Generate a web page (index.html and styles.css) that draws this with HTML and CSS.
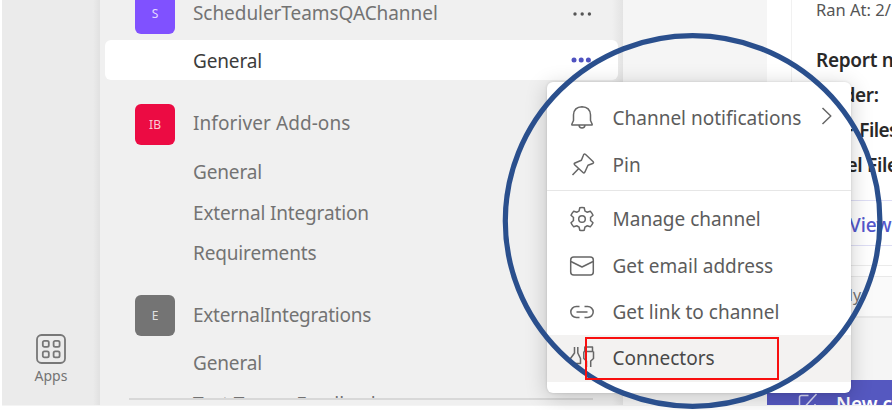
FILE: index.html
```
<!DOCTYPE html>
<html lang="en">
<head>
<meta charset="utf-8">
<title>Teams</title>
<link rel="stylesheet" href="styles.css">
</head>
<body>
<div class="app">
  <nav class="rail">
    <svg class="apps-icon" viewBox="0 0 30 30" fill="none" stroke="#777" stroke-width="1.8">
      <rect x="1" y="1" width="28" height="28" rx="4.5"/>
      <rect x="6.8" y="6.8" width="6" height="6" rx="1.6"/><rect x="17.6" y="6.8" width="6" height="6" rx="1.6"/>
      <rect x="6.8" y="17.4" width="6" height="6" rx="1.6"/><rect x="17.6" y="17.4" width="6" height="6" rx="1.6"/>
    </svg>
    <span class="apps-label">Apps</span>
  </nav>

  <aside class="teams">
    <div class="team team-first"><span class="tile purple">S</span><span class="t-sched">SchedulerTeamsQAChannel</span>
      <svg class="dots" viewBox="0 0 22 8" fill="#555"><circle cx="3" cy="4" r="1.7"/><circle cx="10.2" cy="4" r="1.7"/><circle cx="17.4" cy="4" r="1.7"/></svg>
    </div>
    <div class="channel selected"><span class="t-gen">General</span>
      <svg class="dots" viewBox="0 0 22 8" fill="#4f52c0"><circle cx="3" cy="4" r="2.5"/><circle cx="10.2" cy="4" r="2.5"/><circle cx="17.4" cy="4" r="2.5"/></svg>
    </div>
    <div class="team team-red"><span class="tile red">IB</span><span class="t-info">Inforiver Add-ons</span></div>
    <div class="channel"><span class="t-gen">General</span></div>
    <div class="channel"><span class="t-ext">External Integration</span></div>
    <div class="channel"><span class="t-req">Requirements</span></div>
    <div class="team team-grey"><span class="tile grey">E</span><span class="t-exti">ExternalIntegrations</span></div>
    <div class="channel"><span class="t-gen">General</span></div>
    <div class="channel cut"><span class="t-cut">Test Teams Feedback</span></div>
    <div class="list-end"></div>
  </aside>

  <main class="chat">
    <div class="gutter"></div>
    <div class="thread">
      <article class="card">
        <p class="ran">Ran At: 2/</p>
        <p class="bold first">Report n</p>
        <p class="bold folder">Folder:</p>
        <p class="bold pdf">PDF Files</p>
        <p class="bold excel">Excel Files</p>
        <p class="view">View</p>
      </article>
      <div class="reply">Reply</div>
      <div class="new">
        <svg class="compose" viewBox="0 0 20 20" fill="none" stroke="#d9d9f5" stroke-width="1.5"><path d="M10.5 2.5H3.5Q1.5 2.5 1.5 4.5V20M17 11V20M7.5 13L18.5 1M7.5 13L6.5 16"/></svg>
        <span>New c</span>
      </div>
    </div>
  </main>

  <section class="menu">
    <div class="item">
      <svg viewBox="0 0 26 26"><path d="M2.900 19L4.500 15.500V9.800Q5 2 13 1.800Q21 2 21.500 9.800V15.500L23.100 19Q23.500 20 22.500 20H3.500Q2.500 20 2.900 19ZM10 20.300Q10.500 23 13 23T16 20.300"/></svg>
      <span class="m-chan">Channel notifications</span>
      <svg class="chev" viewBox="0 0 12 20"><path d="M1.500 2L9.800 10L1.500 18"/></svg>
    </div>
    <div class="item"><svg viewBox="0 0 26 26"><path d="M16.600 2.500L24 9.500Q25.200 10.800 23.700 11.500L19 13.300L15.800 20.200Q15.100 21.600 14 20.500L5.600 12.700Q4.600 11.700 6 11L12.400 8.300L14.300 3.400Q15 1.300 16.600 2.500ZM9.300 17L3.500 23"/></svg><span class="m-pin">Pin</span></div>
    <hr>
    <div class="item"><svg viewBox="0 0 26 26"><path d="M10.800 1.800Q13 1.200 15.200 1.800L16 5.100Q17.100 5.600 18 6.200L21.300 5.200Q23 7 24 9.200L21.500 11.500Q21.700 13 21.500 14.500L24 16.800Q23 19.100 21.300 20.800L18 19.800Q17.100 20.500 16 20.900L15.200 24.200Q13 24.800 10.800 24.200L10 20.900Q8.900 20.500 8 19.800L4.700 20.800Q3 19.100 2 16.800L4.500 14.500Q4.300 13 4.500 11.500L2 9.200Q3 7 4.700 5.200L8 6.200Q8.900 5.600 10 5.100Z"/><circle cx="13" cy="13" r="3.300"/></svg><span class="m-man">Manage channel</span></div>
    <div class="item"><svg viewBox="0 0 26 26"><rect x="1.700" y="4" width="22.600" height="18" rx="3"/><path d="M1.900 8.500L13 14L24.100 8.500"/></svg><span class="m-mail">Get email address</span></div>
    <div class="item"><svg viewBox="0 0 26 26"><path d="M10.500 7.500H7.300A5.500 5.500 0 0 0 7.300 18.500H10.500M15.500 7.500H18.700A5.500 5.500 0 0 1 18.700 18.500H15.500M7.500 13H18.500"/></svg><span class="m-link">Get link to channel</span></div>
    <div class="item active"><svg viewBox="0 0 26 26"><path d="M5.500 2V8L1.500 13.500V18.500H11.500V13.500L8.800 8V2M5 18.500V22M15.800 2H23.500V6.500H15.800ZM14.800 6.500V13.500L17.500 16V22M24.500 6.500V13.500L21.700 16V22M14.800 6.500H24.500"/></svg><span class="m-con">Connectors</span></div>
  </section>
</div>
<svg class="ring" viewBox="0 0 892 410" fill="none"><ellipse cx="692.600" cy="221" rx="187.300" ry="185.300" stroke="#2a4f8d" stroke-width="5.200"/></svg>
<div class="highlight"></div>
</body>
</html>
```
FILE: styles.css
```
* { box-sizing: border-box; }
body { margin: 0; width: 892px; height: 410px; overflow: hidden; background: #fff; font-family: "Noto Sans", "Open Sans", sans-serif; font-size: 19px; color: #737373; }
.app { position: relative; display: grid; grid-template-columns: 98px 523px 1fr; height: 406px; margin-left: 2px; border-bottom: 1px solid #f4f4f4; }
.rail { display: flex; flex-direction: column; align-items: center; padding-top: 334px; overflow: hidden; background: linear-gradient(90deg, #ebebeb 91px, #e1e1e1 98px); }
.apps-icon { width: 30px; height: 30px; flex: none; }
.apps-label { margin-top: 2px; font-size: 14px; line-height: 20px; }
.teams { height: 405px; overflow: hidden; display: flex; flex-direction: column; background: linear-gradient(90deg, #f0f0f0 512px, #e3e3e3 523px); }
.teams > div { flex: none; }
.team { display: flex; align-items: center; height: 41px; padding-left: 35px; white-space: nowrap; }
.team > span:not(.tile) { padding-bottom: 2px; }
.team-first { margin-top: -7px; }
.t-ext, .t-req { letter-spacing: -.15px; }
.t-exti { letter-spacing: -.25px; }
.t-info { letter-spacing: .08px; }
.t-sched { letter-spacing: -.06px; }
.tile { display: grid; place-items: center; width: 40px; height: 41px; margin-right: 18px; border-radius: 6px; color: #ffffffcc; font-size: 12px; }
.purple { background: #8051ff; }
.red { background: #ec0b43; }
.grey { background: #747474; }
.channel { display: flex; align-items: center; height: 40.700px; padding-left: 93px; white-space: nowrap; }
.selected { height: 40px; margin: 6px 5px 0 5px; padding-left: 88px; border-radius: 6px; background: #fff; color: #3c3c3c; }
.selected .t-gen { padding-top: 2px; }
.t-gen { letter-spacing: -.15px; }
.dots { width: 22px; height: 8px; margin-left: auto; margin-right: 29px; }
.selected .dots { margin-right: 25px; }
.team-red { margin-top: 23.500px; margin-bottom: 7px; }
.team-grey { margin-top: 21.500px; margin-bottom: 7px; }
.cut { height: 16px; margin-top: -1.500px; align-items: flex-start; overflow: hidden; line-height: 44px; }
.list-end { width: 464px; height: 2px; margin-left: 29px; background: #d8d8d8; }
.chat { display: grid; grid-template-columns: 144px 1fr; min-width: 0; height: 405px; background: #f5f5f5; overflow: hidden; }
.thread { overflow: hidden; white-space: nowrap; }
.card { height: 277px; padding-left: 49px; background: linear-gradient(90deg, #fff 24px, #f1f1f1 24px, #f1f1f1 25px, #fff 25px); border-bottom: 1px solid #e9e9e9; overflow: hidden; }
.card p { margin: 0; }
.card .ran { height: 43px; font-size: 16.500px; line-height: 20px; color: #555; }
.card .bold { height: 35px; line-height: 34px; font-weight: 600; color: #292929; font-size: 19px; letter-spacing: -.3px; }
.card .folder { padding-left: 1px; }
.card .pdf { padding-left: 3px; letter-spacing: -.6px; word-spacing: 2px; }
.card .excel { padding-left: 1px; }
.card .view { width: 120px; height: 66px; margin-top: 17px; margin-left: -24px; padding-left: 56px; border-top: 1px solid #dedef5; border-left: 1px solid #f1f1f1; border-bottom: 1px solid #ebebeb; background: linear-gradient(#fff 44px, #dedef5 44px, #dedef5 45px, #fff 45px); line-height: 48px; font-weight: 500; color: #5458cc; font-size: 19px; }
.reply { height: 41px; padding-left: 53px; border-bottom: 2px solid #e9e9e9; background: #fafafa; font-size: 16px; line-height: 37px; }
.new { display: flex; align-items: flex-start; height: 30px; margin-top: 62px; padding: 13px 0 0 31px; background: #5558c0; color: #fff; font-size: 19px; font-weight: 600; line-height: 22px; }
.compose { width: 20px; height: 20px; margin-right: 18px; flex: none; }
.menu { position: absolute; left: 545px; top: 82px; width: 304px; height: 311px; padding-top: 13px; border-radius: 6px; background: #fff; box-shadow: 0 4px 22px #0003, 0 0 3px #0002; color: #5c5c5c; }
.item { display: flex; align-items: center; height: 46.400px; padding-left: 22px; white-space: nowrap; }
.item svg { width: 26px; height: 26px; margin-right: 17.500px; flex: none; fill: none; stroke: #666; stroke-width: 1.500; stroke-linejoin: round; }
.item .chev { width: 12px; height: 20px; margin-left: auto; margin-right: 18.500px; position: relative; top: -2px; }
.menu hr { height: 1px; margin: 2px 0 5.300px; border: 0; background: #e6e6e6; }
.active { background: #f3f2f1; color: #484848; }
.ring { position: absolute; left: 0; top: 0; width: 892px; height: 410px; }
.highlight { position: absolute; left: 585px; top: 337px; width: 194px; height: 43px; border: 2px solid #f80f0f; }
```
